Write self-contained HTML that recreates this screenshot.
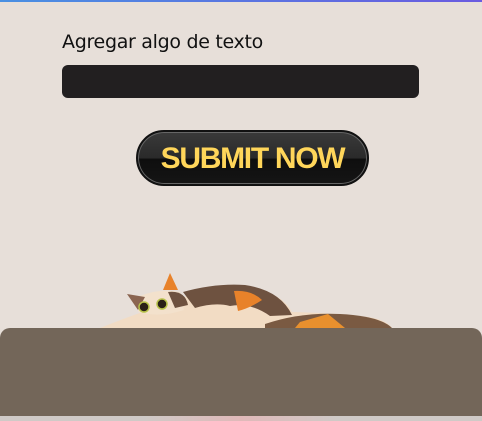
<!DOCTYPE html>
<html><head><style>
*{margin:0;padding:0;box-sizing:border-box}
body{width:482px;height:421px;background:#e7dfd9;position:relative;overflow:hidden;font-family:"Liberation Sans",sans-serif}
.top{position:absolute;left:0;top:0;width:482px;height:2px;background:linear-gradient(90deg,#4a90e2,#6a5be0)}
.lbl{position:absolute;left:62px;top:31px;color:#111;font-family:"DejaVu Sans","Liberation Sans",sans-serif;font-size:19px;letter-spacing:-0.3px}
.inp{position:absolute;left:62px;top:65px;width:357px;height:33px;background:#221f20;border-radius:6px}
.btn{position:absolute;left:136px;top:130px;width:233px;height:56px;border-radius:28px;background:linear-gradient(#3a3a3a 0%,#2a2a2a 50%,#0e0e0e 52%,#151515 100%);border:2px solid #111;box-shadow:0 0 0 1px #666 inset;text-align:center;line-height:53px;font-weight:bold;font-size:30px;letter-spacing:-1.3px;color:#ffd65a}
.box{position:absolute;left:0;top:328px;width:482px;height:88px;background:#736659;border-radius:10px 10px 0 0}
.bot{position:absolute;left:0;top:416px;width:482px;height:5px;background:linear-gradient(90deg,#cfcac7 30%,#e0b9b9 50%,#cfcac7 70%)}
</style></head><body>
<div class="top"></div>
<div class="lbl">Agregar algo de texto</div>
<div class="inp"></div>
<div class="btn">SUBMIT NOW</div>
<svg style="position:absolute;left:0;top:0" width="482" height="421">
<path d="M100 328 Q140 312 165 305 Q195 290 240 286 Q280 290 292 312 Q330 313 360 316 Q385 318 392 328Z" fill="#f2dcc4"/>
<path d="M183 292 Q215 283 245 285 Q280 290 292 315 L270 316 Q250 302 230 306 Q215 302 195 308Z" fill="#6e5240"/>
<path d="M234 291 Q252 290 262 300 Q250 308 238 311Z" fill="#e8822a"/>
<path d="M265 324 Q300 312 340 314 Q380 316 392 328 L265 328Z" fill="#7a5a42"/>
<path d="M300 322 L328 314 L345 328 L295 328Z" fill="#e8902e"/>
<path d="M140 296 Q160 288 180 292 L184 310 Q160 318 138 312Z" fill="#f3e1cc"/>
<path d="M163 290 L170 273 L178 290Z" fill="#e8822a"/>
<path d="M127 294 L145 297 L138 310Z" fill="#8a6450"/>
<path d="M168 292 Q185 290 188 305 L175 308Z" fill="#6e5240"/>
<circle cx="144" cy="307" r="5" fill="#2a2018" stroke="#b8c24a" stroke-width="1.5"/>
<circle cx="162" cy="304" r="5" fill="#2a2018" stroke="#b8c24a" stroke-width="1.5"/>
</svg>
<div class="box"></div>
<div class="bot"></div>
</body></html>
